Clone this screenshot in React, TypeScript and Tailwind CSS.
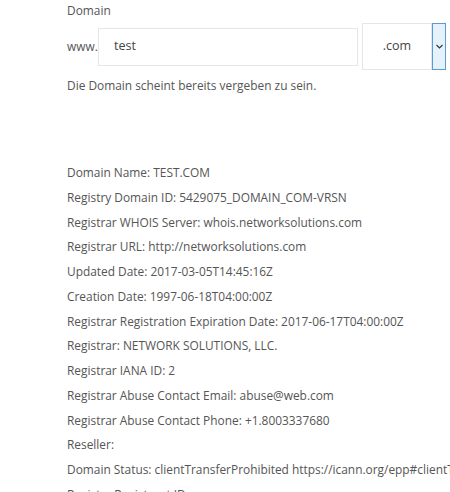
import React from "react";

const whois = [
  "Domain Name: TEST.COM",
  "Registry Domain ID: 5429075_DOMAIN_COM-VRSN",
  "Registrar WHOIS Server: whois.networksolutions.com",
  "Registrar URL: http://networksolutions.com",
  "Updated Date: 2017-03-05T14:45:16Z",
  "Creation Date: 1997-06-18T04:00:00Z",
  "Registrar Registration Expiration Date: 2017-06-17T04:00:00Z",
  "Registrar: NETWORK SOLUTIONS, LLC.",
  "Registrar IANA ID: 2",
  "Registrar Abuse Contact Email: abuse@web.com",
  "Registrar Abuse Contact Phone: +1.8003337680",
  "Reseller:",
  "Domain Status: clientTransferProhibited https://icann.org/epp#clientTransferProhibited",
  "Registry Registrant ID:",
];

export default function App() {
  return (
    <div
      className="w-[450px] h-[492px] overflow-hidden bg-white text-[11.9px] text-[#555]"
      style={{ fontFamily: '"Open Sans", "Noto Sans", Arial, sans-serif' }}
    >
      <div className="pl-[67px]">
        <div className="pt-[1px] leading-[18px]">Domain</div>

        <div className="mt-[4px] flex items-center">
          <span className="w-[31px] shrink-0">www.</span>
          <div className="w-[260px] h-[38px] border border-[#e6e6e6] flex items-center pl-[15px] text-[12.5px] text-[#444]">
            test
          </div>
          <div className="ml-[4px] flex">
            <div className="w-[70px] h-[47px] border border-[#e6e6e6] flex items-center justify-center text-[12.5px] text-[#444]">
              .com
            </div>
            <div className="w-[14px] h-[47px] border border-[#5b9bd5] bg-[#e5f1fb] flex items-center justify-center">
              <svg width="7" height="5" viewBox="0 0 7 5">
                <path d="M0.5 1 L3.5 4 L6.5 1" fill="none" stroke="#333" strokeWidth="1.1" />
              </svg>
            </div>
          </div>
        </div>

        <div className="mt-[6px] leading-[18px]">Die Domain scheint bereits vergeben zu sein.</div>

        <div className="mt-[66px] whitespace-nowrap">
          {whois.map((line) => (
            <div key={line} className="leading-[24.75px]">
              {line}
            </div>
          ))}
        </div>
      </div>
    </div>
  );
}
